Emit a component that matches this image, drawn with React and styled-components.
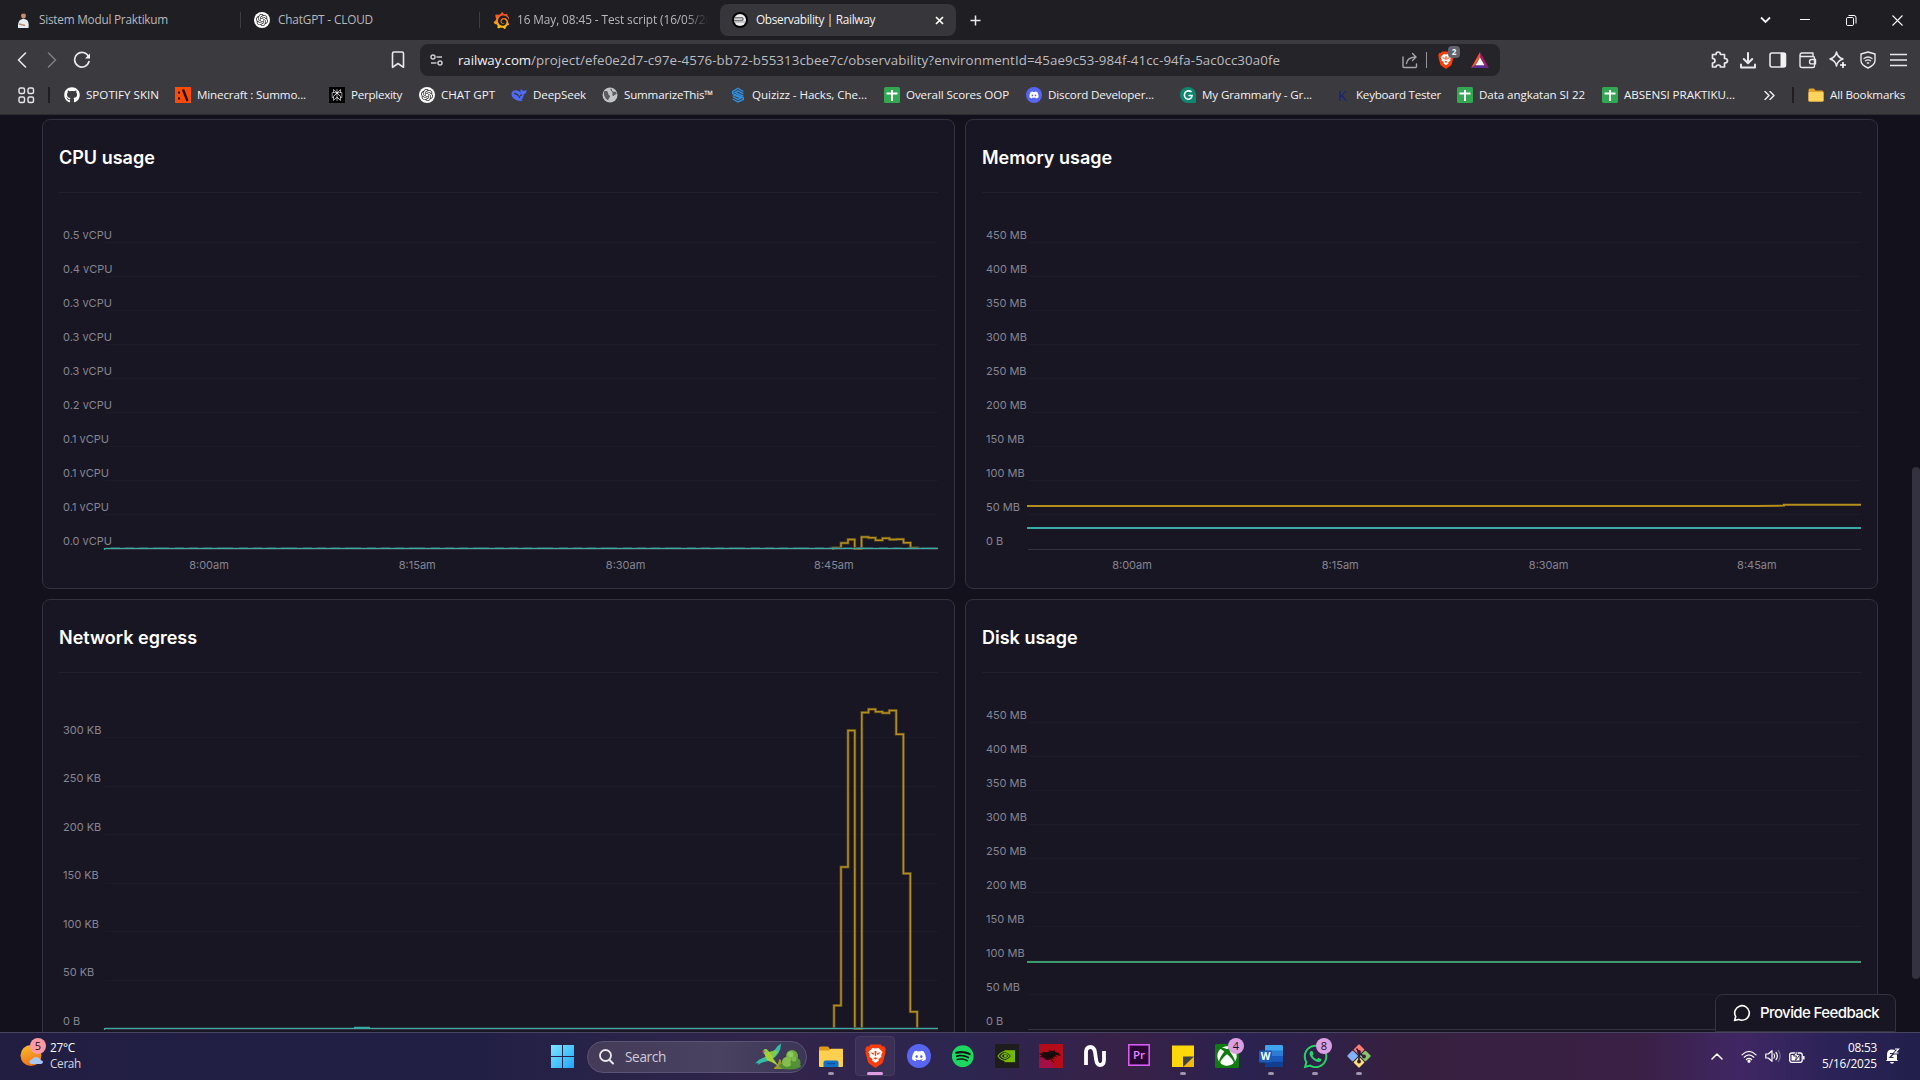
import React, { useLayoutEffect, useRef } from "react";
import styled, { createGlobalStyle } from "styled-components";
import { FaDiscord, FaSpotify, FaGithub, FaWhatsapp, FaXbox } from "react-icons/fa";
import { SiOpenai, SiPerplexity, SiGrafana } from "react-icons/si";

const Global = createGlobalStyle`
  * { box-sizing: border-box; }
  html, body { margin: 0; height: 100%; background: #13111c; overflow: hidden; }
  svg { display: block; flex: none; }
`;

const UI = `"Open Sans", "Noto Sans", sans-serif`;
const APP = `Inter, "Liberation Sans", sans-serif`;

const Screen = styled.div`
  width: 1920px;
  height: 1080px;
  display: flex;
  flex-direction: column;
  overflow: hidden;
  font-family: ${UI};
`;

/* ---------- text that keeps a known advance width ---------- */
const Label = styled.span`
  display: inline-block;
  white-space: pre;
  flex: none;
  font-size: ${(p) => p.$size || 12}px;
  font-weight: ${(p) => p.$weight || 400};
  color: ${(p) => p.$color || "#f2f2f4"};
  line-height: 1.35;
`;

function Fit({ width, size, color, weight, children }) {
  const ref = useRef(null);
  useLayoutEffect(() => {
    const el = ref.current;
    const fit = () => {
      el.style.letterSpacing = "0px";
      const natural = el.getBoundingClientRect().width;
      el.style.letterSpacing = `${(width - natural) / el.textContent.length}px`;
    };
    fit();
    if (document.fonts) document.fonts.ready.then(fit);
  }, [width]);
  return (
    <Label ref={ref} $size={size} $color={color} $weight={weight}>
      {children}
    </Label>
  );
}

/* ---------- tab strip ---------- */
const TabStrip = styled.div`
  height: 40px;
  flex: none;
  display: flex;
  align-items: center;
  background: #1f1e23;
  padding-left: 2px;
`;
const Tab = styled.div`
  width: ${(p) => p.$w}px;
  height: 32px;
  display: flex;
  align-items: center;
  gap: 8px;
  padding: 0 12px 0 ${(p) => p.$pl || 12}px;
  border-radius: 8px;
  background: ${(p) => (p.$active ? "#37363b" : "transparent")};
`;
const TabTitle = styled.div`
  flex: 1;
  overflow: hidden;
  display: flex;
  ${(p) => p.$fade && "mask-image: linear-gradient(90deg, #000 88%, transparent 100%);"}
`;
const TabRule = styled.div`
  width: 1px;
  height: 16px;
  background: #3d3c41;
`;
const StripButton = styled.div`
  width: ${(p) => p.$w}px;
  height: 40px;
  display: flex;
  align-items: center;
  justify-content: center;
`;
const Spacer = styled.div`
  flex: 1;
`;

/* ---------- toolbar ---------- */
const Toolbar = styled.div`
  height: 40px;
  flex: none;
  display: flex;
  align-items: center;
  background: #3b3a3f;
  padding: 0 7px 0 7px;
`;
const ToolButton = styled.div`
  width: 30px;
  height: 30px;
  display: flex;
  align-items: center;
  justify-content: center;
  padding-left: ${(p) => p.$pl || 0}px;
`;
const ToolGap = styled.div`
  width: ${(p) => p.$w}px;
  flex: none;
`;
const AddressBar = styled.div`
  width: 1080px;
  height: 32px;
  border-radius: 8px;
  background: #252429;
  display: flex;
  align-items: center;
  padding: 0 11px 0 10px;
`;
const UrlText = styled.div`
  display: flex;
  margin-left: 14px;
  padding-top: 1px;
`;
const AddressRule = styled.div`
  width: 1px;
  height: 16px;
  background: #96969a;
  margin: 0 11px 0 8px;
`;
const ShieldWrap = styled.div`
  position: relative;
  margin-right: 17px;
`;
const ShieldCount = styled.div`
  position: absolute;
  left: 10px;
  top: -5px;
  width: 12px;
  height: 12px;
  border-radius: 4px;
  background: #62636f;
  color: #fff;
  font-size: 8px;
  font-weight: 700;
  line-height: 12px;
  text-align: center;
`;

/* ---------- bookmarks ---------- */
const BookmarkBar = styled.div`
  height: 35px;
  flex: none;
  display: flex;
  align-items: center;
  background: #3b3a3f;
  border-bottom: 1px solid #2d2c32;
  padding: 0 15px 4px 18px;
`;
const BarRule = styled.div`
  width: 2px;
  height: 16px;
  background: #1f1e23;
  margin: 0 ${(p) => p.$r}px 0 ${(p) => p.$l}px;
`;
const Bookmark = styled.div`
  width: ${(p) => p.$slot}px;
  display: flex;
  align-items: center;
  gap: 6px;
  flex: none;
`;
const IconTile = styled.div`
  width: 16px;
  height: 16px;
  flex: none;
  display: flex;
  align-items: center;
  justify-content: center;
  border-radius: ${(p) => p.$r || 0};
  background: ${(p) => p.$bg || "transparent"};
  color: ${(p) => p.$fg || "#fff"};
  font-size: ${(p) => p.$fs || 12}px;
`;

/* ---------- dashboard ---------- */
const Page = styled.main`
  flex: 1;
  min-height: 0;
  display: flex;
  overflow: hidden;
  background: #13111c;
  font-family: ${APP};
  position: relative;
`;
const Grid = styled.div`
  width: 1912px;
  flex: none;
  display: grid;
  grid-template-columns: 913px 913px;
  grid-auto-rows: 470px;
  gap: 10px;
  padding: 4px 34px 0 42px;
`;
const Card = styled.section`
  border: 1px solid #33323e;
  border-radius: 8px;
  background: #181622;
  padding: 0 16px;
  display: flex;
  flex-direction: column;
`;
const CardHead = styled.header`
  height: 73px;
  flex: none;
  border-bottom: 1px solid #22202c;
  display: flex;
  align-items: center;
  padding-top: 3px;
`;
const CardTitle = styled.h2`
  margin: 0;
  color: #fff;
  font-size: 18px;
  font-weight: 600;
  line-height: 24px;
`;
const ScrollTrack = styled.div`
  width: 8px;
  padding-top: 352px;
`;
const ScrollThumb = styled.div`
  height: 512px;
  border-radius: 4px;
  background: #33323e;
`;
const Feedback = styled.div`
  position: absolute;
  right: 24px;
  bottom: 0;
  width: 181px;
  height: 38px;
  border: 1px solid #33323e;
  border-radius: 8px 8px 0 0;
  background: #181622;
  display: flex;
  align-items: center;
  gap: 9px;
  padding-left: 17px;
`;

const NAMES = {
  cpu: ["0.5 vCPU", "0.4 vCPU", "0.3 vCPU", "0.3 vCPU", "0.3 vCPU", "0.2 vCPU", "0.1 vCPU", "0.1 vCPU", "0.1 vCPU", "0.0 vCPU"],
  mb: ["450 MB", "400 MB", "350 MB", "300 MB", "250 MB", "200 MB", "150 MB", "100 MB", "50 MB", "0 B"],
  kb: ["300 KB", "250 KB", "200 KB", "150 KB", "100 KB", "50 KB", "0 B"],
};
const TIMES = ["8:00am", "8:15am", "8:30am", "8:45am"];
const YELLOW = "#b58e1c";
const TEAL = "#3ba9a6";
const GREEN = "#3d9970";

function Chart({ labels, first, step, times, children }) {
  return (
    <svg width="879" height="395" viewBox="0 0 879 395" fontFamily={APP} fontSize="11" fill="#868593">
      {labels.map((t, i) => {
        const last = i === labels.length - 1;
        const rule = last ? 356.5 : Math.ceil(first + step * i) + 0.5;
        const base = last ? 352.4 : Math.floor(first + step * i) - 2.6;
        return (
          <g key={i}>
            <line x1="46" x2="879" y1={rule} y2={rule} stroke={last ? "#33323e" : "#1d1b27"} />
            <text x="4" y={base}>{t}</text>
          </g>
        );
      })}
      {times && TIMES.map((t, i) => (
        <text key={t} x={150 + i * 208.3} y="376" textAnchor="middle">{t}</text>
      ))}
      {children}
    </svg>
  );
}

function steps(points, base, start) {
  let d = `M${start} ${base}`;
  points.forEach(([x, y]) => {
    d += `H${x}V${y}`;
  });
  return d;
}
function Series({ d, color }) {
  return (
    <g fill="none">
      <path d={d} stroke={color} strokeWidth="3" opacity="0.35" />
      <path d={d} stroke={color} strokeWidth="1.5" />
    </g>
  );
}

const cpuLoad = steps(
  [[774, 354.8], [782, 350], [789, 346.5], [795.7, 355.5], [802.5, 344], [809.5, 344.7], [816.5, 347.2], [823.5, 345.2], [830.5, 346.6], [837.5, 346.3], [844.5, 349.8], [851.5, 354.8], [859, 355.5]],
  355.5, 773
);
const egressLoad = steps(
  [[775, 332.4], [782, 194], [789, 57.5], [795.8, 355.5], [802.8, 39.6], [809.5, 36.2], [816.5, 38.8], [823.5, 40], [830.3, 37.5], [837.2, 61.2], [844.4, 200.4], [851.3, 338.8], [858.2, 355.5]],
  355.5, 775
);

function Baseline() {
  return (
    <g fill="none">
      <path d="M46 355H879" stroke="#2e4a4c" strokeWidth="2" opacity="0.6" />
      <path d="M45.500 357V355.500H879" stroke={TEAL} strokeWidth="1.200" />
    </g>
  );
}

function Panel({ title, children }) {
  return (
    <Card>
      <CardHead>
        <CardTitle>{title}</CardTitle>
      </CardHead>
      {children}
    </Card>
  );
}

/* ---------- taskbar ---------- */
const Taskbar = styled.footer`
  height: 48px;
  flex: none;
  display: flex;
  align-items: center;
  border-top: 1px solid #49445f;
  background: linear-gradient(90deg, #211e42 0, #221f45 480px, #2b2449 640px, #32244b 800px, #2c2650 960px, #382147 1130px, #2a2250 1250px, #36203f 1400px, #3a2045 1640px, #402764 1740px, #2b2358 1830px, #221f4b 1920px);
`;
const Weather = styled.div`
  width: 541px;
  display: flex;
  align-items: center;
  padding: 0 0 1px 20px;
  gap: 5px;
`;
const WeatherIcon = styled.div`
  position: relative;
  width: 25px;
  height: 46px;
  display: flex;
  align-items: center;
`;
const Lines = styled.div`
  display: flex;
  flex-direction: column;
  align-items: ${(p) => p.$align || "flex-start"};
`;
const Cell = styled.div`
  width: 44px;
  height: 47px;
  flex: none;
  display: flex;
  flex-direction: column;
  align-items: center;
  justify-content: center;
  padding-bottom: 1px;
  position: relative;
`;
const Active = styled.div`
  width: 40px;
  height: 40px;
  border-radius: 4px;
  border: 1px solid #473c5e;
  background: #3a2f57;
  display: flex;
  align-items: center;
  justify-content: center;
`;
const Running = styled.i`
  position: absolute;
  bottom: 5px;
  width: ${(p) => (p.$on ? 16 : 6)}px;
  height: 3px;
  border-radius: 2px;
  background: ${(p) => (p.$on ? "#dd9fe3" : "#9c95ab")};
`;
const Badge = styled.b`
  position: absolute;
  left: ${(p) => p.$x || 23}px;
  top: 5px;
  width: 16px;
  height: 16px;
  border-radius: 50%;
  background: ${(p) => p.$bg || "#dd9fe3"};
  color: #17121f;
  font-size: 11px;
  font-weight: 400;
  line-height: 16px;
  text-align: center;
`;
const SearchBox = styled.div`
  width: 220px;
  height: 32px;
  border-radius: 16px;
  border: 1px solid #5b5474;
  background: linear-gradient(90deg, #433b58, #494260 60%, #3c3657);
  display: flex;
  align-items: center;
  margin: 0 2px;
  padding: 0 4px 0 11px;
`;
const SearchText = styled.div`
  margin-left: 11px;
  padding-bottom: 2px;
  flex: 1;
`;
const Tray = styled.div`
  display: flex;
  align-items: center;
  padding: 0 20px 1px 0;
`;
const TrayIcon = styled.div`
  margin-right: ${(p) => p.$r}px;
`;

const Ring = () => (
  <IconTile $bg="#fff" $fg="#333" $r="50%" $fs={12}>
    <SiOpenai />
  </IconTile>
);
const Sheets = () => (
  <svg width="16" height="16">
    <rect width="16" height="16" rx="1.5" fill="#32a852" />
    <path d="M8 3v11M2.5 6.5h11" stroke="#fff" strokeWidth="2" />
  </svg>
);
const Folder = () => (
  <svg width="16" height="16">
    <path d="M0.5 3q0-1.500 1.500-1.500H6L7.500 3.500H14q1.500 0 1.500 1.500v8.500q0 1-1 1h-13q-1 0-1-1z" fill="#e2a32a" />
    <path d="M0.500 6q0-1 1-1H14.500q1 0 1 1v7.500q0 1-1 1h-13q-1 0-1-1z" fill="#ffd45c" />
  </svg>
);

const stroke = { fill: "none", stroke: "#e9e9eb", strokeWidth: 1.6, strokeLinecap: "round", strokeLinejoin: "round" };

const BOOKMARKS = [
  ["SPOTIFY SKIN", 111, 73, <FaGithub size={16} color="#fff" />],
  ["Minecraft : Summo...", 154, 109,
    <svg width="16" height="16"><rect width="16" height="16" fill="#ff4b0a" /><path d="M3 5.500h2M3 11.500h2" stroke="#1a1008" strokeWidth="2.200" /><path d="M8 2.500l4.500 11.500" stroke="#1a1008" strokeWidth="2.400" /></svg>],
  ["Perplexity", 90, 51, <IconTile $bg="#000" $fs={12}><SiPerplexity /></IconTile>],
  ["CHAT GPT", 92, 54, <Ring />],
  ["DeepSeek", 91, 53,
    <svg width="16" height="16"><path d="M0.500 7C0.500 4 3 3 5.500 3.300c2 .3 3 1.700 4.500 2.200-.7-1-.8-2.500-.3-3.500 1 .9 1.500 1.800 3 1.800 1.300 0 2-.3 3-.8-.1 2.500-1.200 3.800-2.900 4.400-.2 2-1 3.800-2.300 5 .8.4 1.200.6 1.500 1.100-2.500.6-5.200.6-7.500-.7C1.900 11.300.5 9.500.5 7z" fill="#4d6bfe" /><path d="M3 6.500c2.500-.2 4.500 2 6 4.500" stroke="#3b3a3f" strokeWidth="1.300" fill="none" /><circle cx="10" cy="8.300" r="1" fill="#3b3a3f" /></svg>],
  ["SummarizeThis™", 128, 89,
    <svg width="16" height="16"><circle cx="8" cy="8" r="7.500" fill="#c3c4c8" /><path d="M2 4.500c2-1 4-.5 4 1.500S8 8 8 9.500 6 11 6.500 13.500C3 12 1.500 8 2 4.500zM9 1.500c1.500 1 .5 2.500 2 3s3-.5 3.500 1.500-1.500 1-2.500 2.500-2 0-1.500-2S7 3 9 1.500z" fill="#5b5b60" /></svg>],
  ["Quizizz - Hacks, Che...", 154, 115,
    <svg width="16" height="16" fill="none" stroke="#2f8fe0" strokeWidth="1.400"><path d="M13.300 4.500L8 1.200 2.700 4.500v2.200l10.600 4v1.800L8 15 2.700 12M13.300 6.800L8 3.800 5 5.500l8.300 3.700M2.700 9.500L8 12.400l3-1.500-8.300-3.300" /></svg>],
  ["Overall Scores OOP", 142, 103, <Sheets />],
  ["Discord Developer...", 154, 106, <IconTile $bg="#5865f2" $r="50%" $fs={10}><FaDiscord /></IconTile>],
  ["My Grammarly - Gr...", 154, 110,
    <svg width="16" height="16"><path d="M8 0a8 8 0 018 8v7q0 1-1 1H8A8 8 0 018 0z" fill="#0d8770" /><path d="M11.500 5A4.200 4.200 0 108 12.200c2.300 0 3.800-1.500 4-3.700H8.500" fill="none" stroke="#fff" strokeWidth="1.600" /></svg>],
  ["Keyboard Tester", 123, 85, <IconTile $fg="#16237e" $fs={15}>K</IconTile>],
  ["Data angkatan SI 22", 145, 106, <Sheets />],
  ["ABSENSI PRAKTIKU...", 162, 111, <Sheets />],
];

function Parrot() {
  return (
    <svg width="48" height="28" viewBox="0 0 48 28">
      <path d="M20 25q5-4 5-9l2 1q0 4 4 6v3H20z" fill="#9a9a2e" />
      <ellipse cx="36" cy="23" rx="11" ry="3.500" fill="#4e8f34" />
      <circle cx="38" cy="13" r="6" fill="#6dab3f" />
      <circle cx="33" cy="19" r="5" fill="#86bd4c" />
      <circle cx="41.500" cy="19.500" r="5" fill="#55913a" />
      <circle cx="36.500" cy="11.500" r="3" fill="#8fca5c" />
      <circle cx="40" cy="16" r="2.500" fill="#7dba49" />
      <path d="M15 9Q20 8 21 6.500 24 2 27 0.500 27 6 24.500 10 22 14 18 16z" fill="#35bda8" />
      <path d="M15 9q4-.5 6-2l3 1.500Q22 13 18 16z" fill="#7fc94b" />
      <path d="M1 20.500Q6 15 13 13.500l4 3q-4 2-7 2.500-4 1-6 3l.5-2z" fill="#35bda8" />
      <path d="M9.500 8q2-3 5 0 3 3 5 8l5 7-7-4q-5-1-6-5z" fill="#a5ce3a" />
      <circle cx="11.500" cy="8.500" r="2.500" fill="#8ecb4e" />
      <path d="M9 7q-1.200 1.800.3 3.200L11 8.500z" fill="#e6404a" />
    </svg>
  );
}

const Word = () => (
  <svg width="24" height="24">
    <rect x="6" y="1" width="18" height="22" rx="1.500" fill="#2b7cd3" />
    <path d="M6 2.500Q6 1 7.500 1h15Q24 1 24 2.500V6.500H6z" fill="#41a5ee" />
    <path d="M6 12h18v5.500H6z" fill="#185abd" />
    <path d="M6 17.500h18v4Q24 23 22.500 23h-15Q6 23 6 21.500z" fill="#103f91" />
    <rect x="0" y="6.500" width="13" height="12" rx="1" fill="#185abd" />
    <text x="6.500" y="16.300" fontSize="10" fontWeight="700" fill="#fff" textAnchor="middle">W</text>
  </svg>
);

function BraveFace({ w, h }) {
  return (
    <svg width={w} height={h} viewBox="0 0 21 24">
      <path d="M5.500 0.500h10l2 2 1.800-.2 1.500 3-.6 2 .3 1.200-2.400 9.200q-.5 1.500-1.800 2.300L10.500 24l-5.800-4Q3.300 19.200 2.900 17.700L.5 8.500.8 7.300l-.6-2 1.500-3 1.800.2z" fill="#fb3d0c" />
      <path d="M10.500 4.500l3-.6L17.500 8l-1.300 3 .3 1.800-3 2.200.3 1.500-3.300 2.500-3.300-2.500.3-1.500-3-2.200.3-1.800L3.500 8l4-4.100z" fill="#fff" />
      <path d="M5.300 8.200l3.500.9-.3 2.200zM15.700 8.200l-3.500.9.3 2.200zM9.500 7h2l-.4 5h-1.200zM8.300 14.200l2.200-1 2.200 1-2.200 1.300z" fill="#fb3d0c" />
    </svg>
  );
}

const APPS = [
  { icon: <svg width="24" height="24"><path d="M0 4q0-1.500 1.500-1.500H9L11 5H23v8H0z" fill="#e09a16" /><path d="M0 6.500H10L12 4.800H24V22q0 1-1 1H1q-1 0-1-1z" fill="#ffd04f" /><path d="M4.500 23v-4.500q0-2 2-2h11q2 0 2 2V23z" fill="#1272c9" /><path d="M8 19.500h8" stroke="#0b559f" strokeWidth="1.500" /></svg>, run: true },
  { icon: <Active><BraveFace w={21} h={24} /></Active>, run: true, on: true },
  { icon: <svg width="24" height="24"><circle cx="12" cy="12" r="12" fill="#5865f2" /><FaDiscord x="4.500" y="4.500" size={15} color="#fff" /></svg> },
  { icon: <svg width="24" height="24"><circle cx="11.500" cy="12" r="10.500" fill="#101512" /><FaSpotify x="0.500" y="1" size={22.500} color="#1ed760" /></svg> },
  {
    icon: (
      <svg width="24" height="24">
        <rect width="24" height="24" fill="#1d1d1b" />
        <path d="M9.500 6.200H20v12H9.500z" fill="#76b900" />
        <path d="M9.500 8q4 .3 7 4-3 3.700-7 4.500z" fill="#1d1d1b" />
        <path d="M3 12q3-4.500 7.500-4.500 3 .5 6 4.500-3 4.300-6.500 4.500Q5.500 16 3 12zM6 12q1.800-2.600 4.500-2.600 2 .3 3.500 2.600-1.500 2.300-4 2.400Q7.500 14.400 6 12z" fill="none" stroke="#76b900" strokeWidth="1.200" />
        <circle cx="10.500" cy="12" r="1.400" fill="#76b900" />
      </svg>
    ),
  },
  {
    icon: (
      <svg width="24" height="24">
        <rect width="24" height="24" fill="#b40c18" />
        <path d="M0 13q7 1 10 3 4 3 5 8H0z" fill="#a50f45" />
        <path d="M0 9.500l5-.3-3-1.400 6 .5 3-1-2-1.300 5 1 2-.8v1.500l3 1 2.500 2-.5 1.200-3-.8-2 .3 2.500 1.800-3-.8-2 1.300 3 1.500-4-.8-3.500 1.600L5 15.300l2-1.300-4 .3 2-1.300-5 .3 3-1.600z" fill="#190a0c" />
        <path d="M11 14.500q3 2 4 4.500" stroke="#190a0c" strokeWidth="0.900" fill="none" />
      </svg>
    ),
  },
  { icon: <svg width="24" height="24"><path d="M3 21V8q0-5 4.500-5Q11 3 12 8l1 7q.8 6 4 6 4 0 4-5V7" stroke="#fff" strokeWidth="3.800" fill="none" /></svg> },
  { icon: <svg width="24" height="24"><rect x="1.800" y="0.800" width="20.400" height="20.400" fill="#2a0634" stroke="#d65cf5" strokeWidth="1.600" /><text x="12" y="15" fontSize="11.500" fontWeight="600" fill="#e389ff" textAnchor="middle">Pr</text></svg> },
  { icon: <svg width="24" height="24"><path d="M1 1.500h22V13l-9 10H1z" fill="#ffd60a" /><path d="M12 12.500h11V23H12z" fill="#3f4043" /><path d="M23 12.500V23H12z" fill="#f1b913" /></svg>, run: true },
  { icon: <svg width="24" height="24"><rect width="24" height="24" rx="1.500" fill="#107c10" /><FaXbox x="2" y="2" size={20} color="#fff" /></svg>, badge: "4" },
  { icon: <Word />, run: true },
  { icon: <FaWhatsapp size={27} color="#25d366" />, badge: "8", run: true },
  {
    icon: (
      <svg width="24" height="24">
        <g transform="rotate(45 12 12)">
          <rect x="3.500" y="3.500" width="8" height="8" rx="1" fill="#ff7d75" />
          <rect x="12.500" y="3.500" width="8" height="8" rx="1" fill="#8cc765" />
          <rect x="3.500" y="12.500" width="8" height="8" rx="1" fill="#83b2f7" />
          <rect x="12.500" y="12.500" width="8" height="8" rx="1" fill="#ffdf76" />
        </g>
        <path d="M9.500 4.500L12 8v10M12 9l5 3.500" stroke="#2b2040" strokeWidth="1.600" fill="none" />
        <circle cx="12" cy="8" r="1.900" fill="#2b2040" /><circle cx="12" cy="17.500" r="1.900" fill="#2b2040" /><circle cx="17" cy="12.500" r="1.900" fill="#2b2040" />
      </svg>
    ),
    run: true,
  },
];

export default function App() {
  return (
    <Screen>
      <Global />
      <TabStrip>
        <Tab $w={238}>
          <svg width="17" height="16"><ellipse cx="9.500" cy="3.500" rx="2.400" ry="3" fill="#c98f72" /><path d="M7 3q0-3 2.500-3T12 3l-1-1.300H8z" fill="#2b1c18" /><path d="M4 16q-.5-7 3-8.500l2.500-.8 2.500.8q3.500 1.500 2.500 8.500z" fill="#e8edf3" /><path d="M5 12l6 1.500" stroke="#b98a72" strokeWidth="1.500" /></svg>
          <Fit width={129} size={11.8} color="#b9b9bd">Sistem Modul Praktikum</Fit>
        </Tab>
        <TabRule />
        <Tab $w={238} $pl={13}>
          <Ring />
          <Fit width={95} size={11.8} color="#b9b9bd">ChatGPT - CLOUD</Fit>
        </Tab>
        <TabRule />
        <Tab $w={240} $pl={13}>
          <svg width="16" height="17">
            <defs>
              <linearGradient id="graf" x1="0" y1="0" x2="0" y2="24" gradientUnits="userSpaceOnUse">
                <stop offset="0.150" stopColor="#f0502a" />
                <stop offset="0.950" stopColor="#fbca0a" />
              </linearGradient>
            </defs>
            <SiGrafana size={17} fill="url(#graf)" style={{ fill: "url(#graf)" }} />
          </svg>
          <TabTitle $fade><Fit width={195} size={11.8} color="#b9b9bd">16 May, 08:45 - Test script (16/05/20</Fit></TabTitle>
        </Tab>
        <Tab $w={236} $active>
          <svg width="16" height="16"><circle cx="8" cy="8" r="8" fill="#050506" /><circle cx="8" cy="8" r="6" fill="#eee" /><path d="M2 8.500h7q2 0 2-1.500T9 5.800H3" stroke="#77777b" strokeWidth="1.500" fill="none" /><path d="M2.500 10h11" stroke="#9a9a9e" /></svg>
          <TabTitle><Fit width={119} size={11.8} color="#f4f4f6">Observability | Railway</Fit></TabTitle>
          <svg width="9" height="9"><path d="M1 1l7 7M8 1L1 8" stroke="#fff" strokeWidth="1.700" /></svg>
        </Tab>
        <StripButton $w={39}><svg width="11" height="11"><path d="M5.500 0.500v10M0.500 5.500h10" stroke="#e9e9eb" strokeWidth="1.500" /></svg></StripButton>
        <Spacer />
        <StripButton $w={34}><svg width="11" height="8"><path d="M1 1.500l4.500 4.500L10 1.500" fill="none" stroke="#f2f2f2" strokeWidth="1.800" /></svg></StripButton>
        <StripButton $w={46}><svg width="10" height="2"><path d="M0 0.500h10" stroke="#fff" /></svg></StripButton>
        <StripButton $w={46}><svg width="11" height="11" fill="none" stroke="#fff"><rect x="0.500" y="2.500" width="7" height="8" rx="1.200" /><path d="M2.500 0.500h5.500q2 0 2 2v6" /></svg></StripButton>
        <StripButton $w={46}><svg width="11" height="11"><path d="M0.500 0.500l10 10M10.500 0.500l-10 10" stroke="#fff" strokeWidth="1.100" /></svg></StripButton>
      </TabStrip>

      <Toolbar>
        <ToolButton><svg width="10" height="16"><path d="M8.500 1L1.500 8l7 7" {...stroke} /></svg></ToolButton>
        <ToolButton><svg width="10" height="16"><path d="M1.500 1l7 7-7 7" {...stroke} stroke="#7c7c80" /></svg></ToolButton>
        <ToolButton><svg width="18" height="18"><path d="M15.500 5.500A7.300 7.300 0 1016 10.500" {...stroke} strokeWidth="1.700" /><path d="M17 2.500v5h-5z" fill="#f2f2f2" /></svg></ToolButton>
        <Spacer />
        <ToolButton><svg width="14" height="18"><path d="M1.500 2.500q0-1.500 1.500-1.500h8q1.500 0 1.500 1.500V16.300L7 12.500l-5.500 3.800z" {...stroke} /></svg></ToolButton>
        <ToolGap $w={7} />
        <AddressBar>
          <svg width="14" height="12" fill="none" stroke="#c9c9cd" strokeWidth="1.500"><circle cx="3" cy="3" r="2" /><path d="M6.500 3H12M1 9h5.500" /><circle cx="10" cy="9" r="2" /></svg>
          <UrlText>
            <Fit width={73} size={13.3} color="#f2f2f4">railway.com</Fit>
            <Fit width={749} size={13.3} color="#bcbcc1">/project/efe0e2d7-c97e-4576-bb72-b55313cbee7c/observability?environmentId=45ae9c53-984f-41cc-94fa-5ac0cc30a0fe</Fit>
          </UrlText>
          <Spacer />
          <svg width="16" height="17"><path d="M1 5v9.500q0 1 1 1h11.500q1 0 1-1V12M4.500 11.500Q5 5.500 13.500 5M10.500 1.500L14 5l-3.500 3.500" {...stroke} stroke="#a8a8ac" strokeWidth="1.400" /></svg>
          <AddressRule />
          <ShieldWrap><BraveFace w={16} h={18} /><ShieldCount>2</ShieldCount></ShieldWrap>
          <svg width="18" height="16"><path d="M9 0L0 16l4.500-2.800L9 5.500z" fill="#ff5030" /><path d="M9 0l9 16-4.500-2.800L9 5.500z" fill="#9e1f63" /><path d="M0 16h18l-4.500-3h-9z" fill="#5f2d91" /><path d="M9 5.500l4.500 7.700h-9z" fill="#fff" /></svg>
        </AddressBar>
        <ToolGap $w={203} />
        <ToolButton $pl={4}><svg width="18" height="18"><path d="M1.500 3.500H5Q5 1 7.200 1T9.500 3.500H13.500V7.500Q16.500 7.500 16.500 9.700T13.500 12V16H9.500q0-2-2.200-2T5 16H1.500V12Q4 12 4 9.700T1.500 7.500z" {...stroke} strokeWidth="1.700" /></svg></ToolButton>
        <ToolButton><svg width="16" height="17"><path d="M8 1v10M3.800 7L8 11.200 12.200 7M1 12.500v3h14v-3" {...stroke} strokeWidth="2" /></svg></ToolButton>
        <ToolButton><svg width="18" height="16"><rect x="1" y="1" width="15.500" height="14" rx="2" {...stroke} /><path d="M11.500 1h5v14h-5z" fill="#f2f2f2" /></svg></ToolButton>
        <ToolButton><svg width="18" height="17"><path d="M1 3v10.500q0 2 2 2h11q1.500 0 1.500-1.500V6q0-1.500-1.500-1.500H2.500Q1 4.500 1 3t1.500-2H14v3.500M16.500 7.500H12.500q-2 0-2 2.200t2 2.200h4z" {...stroke} strokeWidth="1.400" /></svg></ToolButton>
        <ToolButton><svg width="18" height="18"><path d="M7.500 1q1 5.500 6.500 7-5.500 1.500-6.500 7-1-5.500-6.500-7Q6.500 6.500 7.500 1z" {...stroke} strokeWidth="1.500" /><path d="M14 11v6M11 14h6" stroke="#fff" strokeWidth="1.600" /></svg></ToolButton>
        <ToolButton><svg width="16" height="18"><path d="M8 1l7 2v6.500q0 4.500-7 7.500-7-3-7-7.500V3z" {...stroke} strokeWidth="1.400" /><path d="M4 7.500q4-3 8 0M5.500 9.800q2.500-2 5 0M7.300 12h1.400" {...stroke} strokeWidth="1.300" /></svg></ToolButton>
        <ToolButton><svg width="17" height="14"><path d="M0 1.500h17M0 7h17M0 12.500h17" stroke="#e9e9eb" strokeWidth="1.500" /></svg></ToolButton>
      </Toolbar>

      <BookmarkBar>
        <svg width="17" height="17" {...stroke} strokeWidth="1.400"><rect x="1" y="1" width="5.500" height="5.500" rx="1.500" /><rect x="10" y="1" width="5.500" height="5.500" rx="1.500" /><rect x="1" y="10" width="5.500" height="5.500" rx="1.500" /><rect x="10" y="10" width="5.500" height="5.500" rx="1.500" /></svg>
        <BarRule $l={13} $r={14} />
        {BOOKMARKS.map(([name, slot, w, icon]) => (
          <Bookmark key={name} $slot={slot}>
            {icon}
            <Fit width={w} size={11.6}>{name}</Fit>
          </Bookmark>
        ))}
        <svg width="11" height="9"><path d="M1 0.500l4 4-4 4M6 0.500l4 4-4 4" {...stroke} strokeWidth="1.500" /></svg>
        <BarRule $l={17} $r={14} />
        <Bookmark $slot={97}>
          <Folder />
          <Fit width={75} size={11.6}>All Bookmarks</Fit>
        </Bookmark>
      </BookmarkBar>

      <Page>
        <Grid>
          <Panel title="CPU usage">
            <Chart labels={NAMES.cpu} first={49} step={34} times>
              <Series d={cpuLoad} color={YELLOW} />
              <Baseline />
              <path d="M52 354.500H879" stroke={TEAL} strokeWidth="1" strokeDasharray="9 5 9 5 9 5 16 6" opacity="0.3" />
            </Chart>
          </Panel>
          <Panel title="Memory usage">
            <Chart labels={NAMES.mb} first={49} step={34} times>
              <path d="M45 313H774L802 312.600V311.700H879" stroke={YELLOW} strokeWidth="2" fill="none" />
              <path d="M45 335H879" stroke={TEAL} strokeWidth="2" />
            </Chart>
          </Panel>
          <Panel title="Network egress">
            <Chart labels={NAMES.kb} first={64} step={48.5}>
              <Series d={egressLoad} color={YELLOW} />
              <Baseline />
              <path d="M295 354.500h16" stroke={TEAL} strokeWidth="1.500" />
            </Chart>
          </Panel>
          <Panel title="Disk usage">
            <Chart labels={NAMES.mb} first={49} step={34}>
              <path d="M45 289H879" stroke={GREEN} strokeWidth="2" />
            </Chart>
          </Panel>
        </Grid>
        <ScrollTrack><ScrollThumb /></ScrollTrack>
        <Feedback>
          <svg width="18" height="18" viewBox="0 0 18 18"><path d="M1.500 16.500l1.200-3.800A7.300 7.300 0 119 16.300q-1.800 0-3.500-.9z" {...stroke} stroke="#fff" strokeWidth="1.600" /></svg>
          <Fit width={119} size={15} weight={500} color="#fff">Provide Feedback</Fit>
        </Feedback>
      </Page>

      <Taskbar>
        <Weather>
          <WeatherIcon>
            <svg width="25" height="24" viewBox="0 0 25 24"><defs><linearGradient id="sun" x1="0" y1="0" x2="0.300" y2="1"><stop offset="0" stopColor="#f7c22f" /><stop offset="1" stopColor="#f07317" /></linearGradient></defs><circle cx="11" cy="11.500" r="10.500" fill="url(#sun)" /><path d="M12 20q-3-.3-2.500-2.500T12 15.500Q13 12.500 16.500 13t4 3q2.500.3 2.500 2T21 20z" fill="#a9c6f8" /></svg>
            <Badge $x={10} $bg="#ff99a4">5</Badge>
          </WeatherIcon>
          <Lines>
            <Fit width={25} size={11.8} color="#fff">27°C</Fit>
            <Fit width={31} size={11.8} color="#d5d3df">Cerah</Fit>
          </Lines>
        </Weather>
        <Cell>
          <svg width="24" height="23"><defs><linearGradient id="win" x1="0" y1="0" x2="1" y2="1"><stop offset="0" stopColor="#7be8ff" /><stop offset="1" stopColor="#1fa4ff" /></linearGradient></defs><path d="M0 0h11v11H0zM12 0h11v11H12zM0 12h11v11H0zM12 12h11v11H12z" fill="url(#win)" /></svg>
        </Cell>
        <SearchBox>
          <svg width="15" height="16"><circle cx="6.500" cy="6.500" r="5.500" {...stroke} strokeWidth="1.800" /><path d="M10.500 11l3.500 3.500" {...stroke} strokeWidth="2" /></svg>
          <SearchText><Fit width={41} size={13.6} color="#cfcbd9">Search</Fit></SearchText>
          <Parrot />
        </SearchBox>
        {APPS.map((a, i) => (
          <Cell key={i}>
            {a.icon}
            {a.badge && <Badge>{a.badge}</Badge>}
            {a.run && <Running $on={a.on} />}
          </Cell>
        ))}
        <Spacer />
        <Tray>
          <TrayIcon $r={18}><svg width="12" height="7"><path d="M1 6l5-5 5 5" {...stroke} stroke="#fff" strokeWidth="1.500" /></svg></TrayIcon>
          <TrayIcon $r={8}><svg width="16" height="13" {...stroke} stroke="#fff" strokeWidth="1.200"><path d="M1 4.800q7-7 14 0M3.200 7.200q4.800-4.600 9.600 0M5.400 9.500q2.600-2.400 5.200 0" /><circle cx="8" cy="11.200" r="1" fill="#fff" /></svg></TrayIcon>
          <TrayIcon $r={8}><svg width="16" height="14" {...stroke} stroke="#fff" strokeWidth="1.200"><path d="M0.800 5v4h2.500L7 12.300V1.700L3.300 5zM9 5q1.300 2 0 4M11 3.300q2.700 3.700 0 7.400" /><path d="M13.200 1.500q4 5.500 0 11" opacity="0.350" /></svg></TrayIcon>
          <TrayIcon $r={17}><svg width="16" height="13"><rect x="0.700" y="3" width="12.500" height="9.300" rx="2" {...stroke} stroke="#fff" strokeWidth="1.300" /><path d="M14.800 6v3.500" stroke="#fff" strokeWidth="1.500" /><path d="M2.500 5h8v5.500h-8z" fill="#fff" /><path d="M8.500 0L4.500 6h3l-1 4.500L11 4.500H8z" fill="#fff" stroke="#352660" strokeWidth="0.900" /></svg></TrayIcon>
          <Lines $align="flex-end">
            <Fit width={29} size={11.8} color="#fff">08:53</Fit>
            <Fit width={55} size={11.8} color="#fff">5/16/2025</Fit>
          </Lines>
          <svg width="15" height="16" style={{ marginLeft: 8 }}><path d="M2 12V6.500Q2 1.500 7 1.500T12 6.500V12l1.300 1H.7zM5 14h4q-.3 1.800-2 1.800T5 14z" fill="#fff" /><path d="M5 5.500h3.500L5 9.500h3.500" stroke="#2b2358" strokeWidth="1.200" fill="none" /><path d="M10 1h3.500L10 5h3.500" stroke="#2b2358" strokeWidth="3" fill="none" /><path d="M10 1h3.500L10 5h3.500" stroke="#fff" strokeWidth="1.200" fill="none" /></svg>
        </Tray>
      </Taskbar>
    </Screen>
  );
}
